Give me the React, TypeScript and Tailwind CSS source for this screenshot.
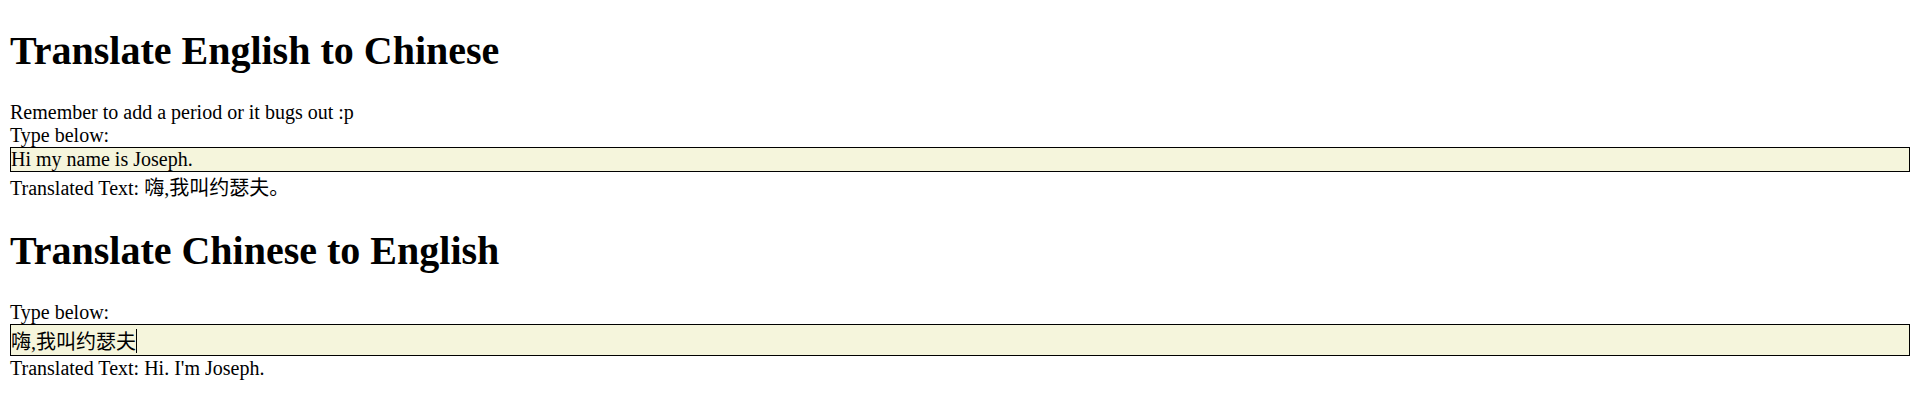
import React from "react";

const serif = "font-['Liberation_Serif','Noto_Sans_CJK_SC',serif]";

export default function App() {
  return (
    <div className={`bg-white text-black px-[10px] pb-[10px] text-[20px] leading-[normal] ${serif}`}>
      <h1 className="text-[40px] font-bold leading-[normal] mt-[26.8px] mb-[26.8px]">Translate English to Chinese</h1>
      <div>Remember to add a period or it bugs out :p</div>
      <div>Type below:</div>
      <div className="border border-black bg-[#f5f5dc]">Hi my name is Joseph.</div>
      <div>Translated Text: 嗨,我叫约瑟夫。</div>
      <h1 className="text-[40px] font-bold leading-[normal] mt-[26.8px] mb-[26.8px]">Translate Chinese to English</h1>
      <div>Type below:</div>
      <div className="border border-black bg-[#f5f5dc] flex items-center pt-[1px]">
        <span>嗨,我叫约瑟夫</span>
        <span className="inline-block w-px h-[24px] bg-black" />
      </div>
      <div className="pt-[1px]">Translated Text: Hi. I'm Joseph.</div>
    </div>
  );
}
